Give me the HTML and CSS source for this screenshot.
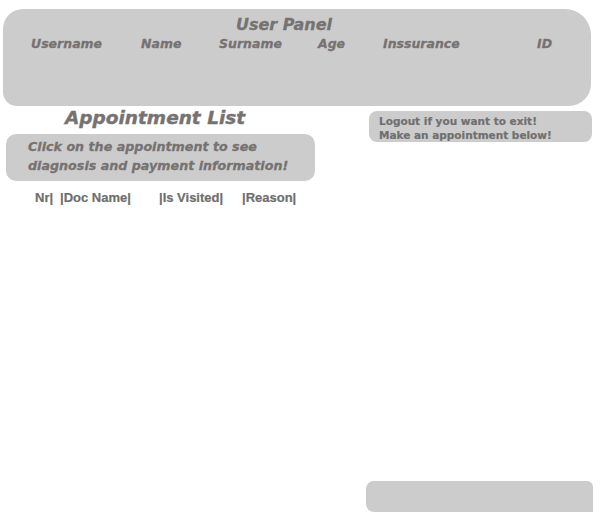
FILE: index.html
```html
<!DOCTYPE html>
<html>
<head>
<meta charset="utf-8">
<link rel="stylesheet" href="styles.css">
</head>
<body>
<div class="page">
  <section class="user-panel">
    <div class="panel-title">User Panel</div>
    <div class="panel-cols">
      <span class="pc pc-user">Username</span>
      <span class="pc pc-name">Name</span>
      <span class="pc pc-sur">Surname</span>
      <span class="pc pc-age">Age</span>
      <span class="pc pc-ins">Inssurance</span>
      <span class="pc pc-id">ID</span>
    </div>
  </section>
  <div class="main">
    <div class="left">
      <h1 class="list-title">Appointment List</h1>
      <div class="hint">Click on the appointment to see<br>diagnosis and payment information!</div>
      <div class="cols">
        <span class="c c-nr">Nr|</span>
        <span class="c c-doc">|Doc Name|</span>
        <span class="c c-vis">|Is Visited|</span>
        <span class="c c-rea">|Reason|</span>
      </div>
    </div>
    <div class="right">
      <div class="logout">Logout if you want to exit!<br>Make an appointment below!</div>
      <div class="bottom-box"></div>
    </div>
  </div>
</div>
</body>
</html>
```
FILE: styles.css
```css
html, body {
  margin: 0;
  padding: 0;
  background: #ffffff;
}
body {
  font-family: "Liberation Sans", Arial, sans-serif;
  color: #777777;
}
.page {
  width: 600px;
  height: 520px;
}
.user-panel {
  margin: 9px 0 0 3px;
  width: 588px;
  height: 97px;
  background: #cccccc;
  border-radius: 20px 26px 22px 14px;
  box-sizing: border-box;
  padding-top: 6px;
  font-family: "DejaVu Sans", sans-serif;
}
.panel-title {
  font-size: 16px;
  font-weight: bold;
  font-style: italic;
  line-height: 20px;
  padding-left: 233px;
  color: #767272;
  -webkit-text-stroke: 0.3px #767272;
}
.panel-cols {
  display: flex;
  padding-left: 28px;
  padding-top: 1px;
  font-size: 12.5px;
  font-weight: bold;
  font-style: italic;
  line-height: 16px;
  color: #767272;
  -webkit-text-stroke: 0.3px #767272;
}
.pc { display: block; }
.pc-user { width: 110px; }
.pc-name { width: 78px; }
.pc-sur { width: 99px; }
.pc-age { width: 65px; }
.pc-ins { width: 154px; }
.main {
  display: flex;
  height: 414px;
}
.left {
  width: 366px;
}
.list-title {
  margin: 0;
  padding: 1px 0 0 65px;
  font-family: "DejaVu Sans", sans-serif;
  font-size: 18.5px;
  line-height: 22px;
  font-weight: bold;
  font-style: italic;
  color: #767272;
  -webkit-text-stroke: 0.4px #767272;
}
.hint {
  margin: 5px 0 0 6px;
  width: 309px;
  height: 47px;
  box-sizing: border-box;
  background: #cccccc;
  border-radius: 10px;
  padding: 3px 0 0 22px;
  font-family: "DejaVu Sans", sans-serif;
  font-size: 12.7px;
  line-height: 19px;
  font-weight: bold;
  font-style: italic;
  color: #767272;
  -webkit-text-stroke: 0.3px #767272;
}
.cols {
  display: flex;
  margin-top: 9px;
  font-size: 13px;
  font-weight: bold;
  line-height: 15px;
  color: #6e6e6e;
  -webkit-text-stroke: 0.2px #6e6e6e;
}
.c { display: block; }
.c-nr { padding-left: 35px; width: 25px; }
.c-doc { width: 99px; }
.c-vis { width: 83px; }
.right {
  display: flex;
  flex-direction: column;
  width: 227px;
}
.logout {
  margin: 5px 0 0 3px;
  width: 223px;
  height: 31px;
  box-sizing: border-box;
  background: #cccccc;
  border-radius: 8px;
  padding: 3px 0 0 10px;
  font-family: "DejaVu Sans", sans-serif;
  font-size: 10.5px;
  line-height: 14px;
  font-weight: bold;
  color: #707070;
  -webkit-text-stroke: 0.2px #707070;
}
.bottom-box {
  margin-top: auto;
  margin-bottom: 8px;
  width: 227px;
  height: 31px;
  background: #cccccc;
  border-radius: 8px 6px 0 8px;
}
```
